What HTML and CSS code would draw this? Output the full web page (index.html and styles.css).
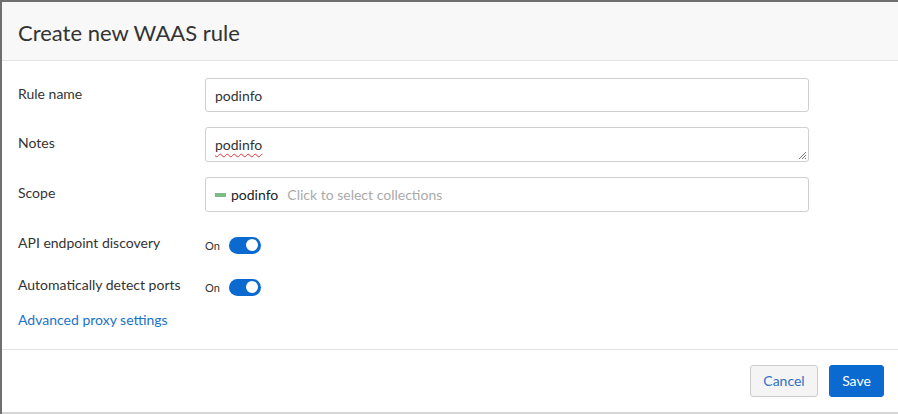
FILE: index.html
```html
<!DOCTYPE html>
<html>
<head>
<meta charset="utf-8">
<link rel="stylesheet" href="styles.css">
</head>
<body>
<div class="modal">
  <div class="modal-header">
    <h1 class="title">Create new WAAS rule</h1>
  </div>
  <div class="modal-body">
    <div class="row">
      <div class="label">Rule name</div>
      <div class="field input">podinfo</div>
    </div>
    <div class="row">
      <div class="label">Notes</div>
      <div class="field input textarea"><span class="misspelled">podinfo</span>
        <svg class="grip" width="10" height="10" viewBox="0 0 10 10"><path d="M9 2 L2 9 M9 5 L5 9 M9 8 L8 9" stroke="#777" stroke-width="1" fill="none"/></svg>
      </div>
    </div>
    <div class="row">
      <div class="label">Scope</div>
      <div class="field input scope">
        <span class="tag"><span class="tag-color"></span><span class="tag-name">podinfo</span></span>
        <span class="placeholder">Click to select collections</span>
      </div>
    </div>
    <div class="row toggle-row first-toggle">
      <div class="label">API endpoint discovery</div>
      <div class="field toggle-field"><span class="on">On</span><span class="switch"><span class="knob"></span></span></div>
    </div>
    <div class="row toggle-row">
      <div class="label">Automatically detect ports</div>
      <div class="field toggle-field"><span class="on">On</span><span class="switch"><span class="knob"></span></span></div>
    </div>
    <a class="link" href="#">Advanced proxy settings</a>
  </div>
  <div class="modal-footer">
    <button class="btn btn-cancel">Cancel</button>
    <button class="btn btn-save">Save</button>
  </div>
</div>
</body>
</html>
```
FILE: styles.css
```css
html, body {
  margin: 0;
  padding: 0;
  background: #6f6f6f;
  width: 898px;
  height: 414px;
  overflow: hidden;
  font-family: Lato, "Open Sans", sans-serif;
  color: #333;
}
.modal {
  margin: 2px 0 0 2px;
  background: #fff;
  display: flex;
  flex-direction: column;
  border-bottom: 2px solid #d6d6d6;
  box-sizing: border-box;
  height: 412px;
}
.modal-header {
  background: #f8f8f8;
  height: 59px;
  border-bottom: 1px solid #e3e3e3;
  display: flex;
  align-items: center;
  padding-left: 16px;
  box-sizing: border-box;
}
.title {
  margin: 0;
  font-size: 22px;
  font-weight: 400;
  color: #333;
  position: relative;
  top: 1px;
}
.modal-body {
  padding: 17px 0 0 16px;
  height: 289px;
  box-sizing: border-box;
  border-bottom: 1px solid #e3e3e3;
}
.row {
  display: flex;
  align-items: center;
  margin-bottom: 15px;
}
.label {
  width: 187px;
  font-size: 14px;
  color: #333;
  align-self: flex-start;
  padding-top: 7px;
}
.field {
  width: 604px;
  box-sizing: border-box;
}
.input {
  height: 34px;
  border: 1px solid #cfcfcf;
  border-radius: 3px;
  font-size: 14px;
  padding: 0 9px;
  display: flex;
  align-items: center;
  color: #333;
  position: relative;
}
.textarea {
  height: 35px;
}
.scope {
  height: 35px;
}
.misspelled {
  text-decoration: underline wavy #e03030;
  text-decoration-thickness: 1px;
  text-underline-offset: 3px;
}
.grip {
  position: absolute;
  right: 1px;
  bottom: 1px;
}
.tag {
  display: flex;
  align-items: center;
}
.tag-color {
  width: 11px;
  height: 4px;
  background: #7dbb87;
  margin-right: 5px;
}
.tag-name {
  color: #222;
  font-size: 14px;
}
.placeholder {
  margin-left: 9px;
  color: #aaa;
  font-size: 14px;
}
.toggle-row {
  margin-bottom: 0;
  height: 42px;
}
.first-toggle {
  margin-top: -3px;
}
.toggle-row .label {
  align-self: center;
  padding-top: 0;
  position: relative;
  top: -3px;
}
.toggle-field {
  display: flex;
  align-items: center;
}
.on {
  font-size: 11px;
  color: #333;
  width: 24px;
}
.switch {
  width: 32px;
  height: 17px;
  border-radius: 9px;
  background: #0a6ad0;
  position: relative;
  display: inline-block;
}
.knob {
  position: absolute;
  right: 3px;
  top: 2.5px;
  width: 12px;
  height: 12px;
  border-radius: 50%;
  background: #fff;
}
.link {
  display: block;
  margin-top: 3px;
  color: #1a73c7;
  font-size: 14px;
  text-decoration: none;
}
.modal-footer {
  flex: 1;
  display: flex;
  justify-content: flex-end;
  align-items: center;
  padding-right: 14px;
  gap: 11px;
  padding-bottom: 1px;
}
.btn {
  height: 32px;
  border-radius: 3px;
  font-family: Lato, "Open Sans", sans-serif;
  font-size: 14px;
  padding: 0 12px;
  cursor: pointer;
}
.btn-cancel {
  background: #f4f4f4;
  border: 1px solid #cccccc;
  color: #2f72c4;
  width: 68px;
}
.btn-save {
  background: #0a6ad0;
  border: 1px solid #0a6ad0;
  color: #fff;
  width: 55px;
}
```
